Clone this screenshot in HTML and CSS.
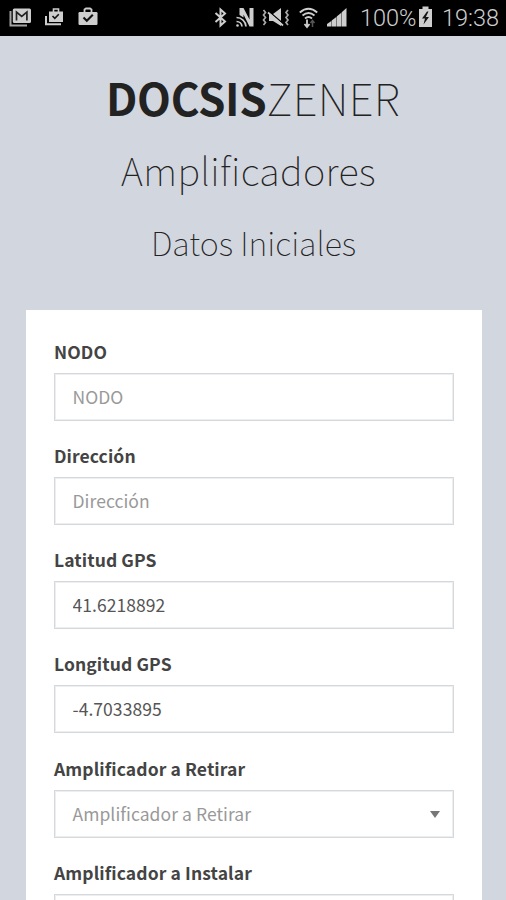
FILE: index.html
```html
<!DOCTYPE html>
<html lang="es">
<head>
<meta charset="utf-8">
<title>DOCSIS Zener</title>
<link rel="stylesheet" href="styles.css">
</head>
<body>
<div class="statusbar">
  <svg class="status-icons" viewBox="0 0 350 36" width="350" height="36">
    <!-- mail -->
    <path d="M10.500 11v14.500h16.500" fill="none" stroke="#a5a5a5" stroke-width="2"/>
    <rect x="12.800" y="8.500" width="18.200" height="14.500" rx="1.500" fill="#cecece"/>
    <path d="M16.500 20.500v-8.500l5.200 4.500 5.200-4.500v8.500" fill="none" stroke="#222" stroke-width="1.700"/>
    <!-- stacked bag -->
    <path d="M46 16v8.300h15" fill="none" stroke="#cecece" stroke-width="2"/>
    <path d="M49 11.500h14v10.500h-14z" fill="#cecece"/>
    <path d="M53.500 12v-3h5v3" fill="none" stroke="#cecece" stroke-width="1.600"/>
    <path d="M52.500 16l2.300 2.300 4-4" fill="none" stroke="#111" stroke-width="1.600"/>
    <!-- bag -->
    <rect x="78.500" y="12" width="19" height="13" rx="1.200" fill="#cecece"/>
    <path d="M84.500 12.500v-3l1.500-1h4l1.500 1v3" fill="none" stroke="#cecece" stroke-width="1.800"/>
    <path d="M83.500 17.500l3.300 3.200 6-6" fill="none" stroke="#111" stroke-width="2.100"/>
    <!-- bluetooth -->
    <path d="M215.500 13l9.500 8.500-4.500 4v-16l4.500 4-9.500 8.500" fill="none" stroke="#cecece" stroke-width="2"/>
    <!-- nfc -->
    <path d="M239.500 15v-7h4l6 11.500v-11.500h4v18.500h-4l-6-12v3z" fill="#cecece"/>
    <path d="M236.500 17.500a9.500 9.500 0 0 1 9.500 9M236.500 21.500a5.500 5.500 0 0 1 5.500 5" fill="none" stroke="#cecece" stroke-width="1.700"/>
    <circle cx="237.500" cy="25.500" r="1.300" fill="#cecece"/>
    <!-- vibrate and mute -->
    <path d="M263.500 10l2 2.500-2 2.500 2 2.500-2 2.500 2 2.500-2 2.500M288 10l-2 2.500 2 2.500-2 2.500 2 2.500-2 2.500 2 2.500" fill="none" stroke="#aaa" stroke-width="1.700"/>
    <path d="M269 14h4l8-6v18l-8-5h-4z" fill="#cecece"/>
    <path d="M269 11.500l14 12" stroke="#000" stroke-width="1.500"/>
    <path d="M268 12.500l15 13" stroke="#cecece" stroke-width="1.700"/>
    <!-- wifi -->
    <path d="M299.800 12.500q8.700-7.500 17.400 0M302.500 15.500q6-5 12 0M305 18.500q3.500-2.800 7 0" fill="none" stroke="#cecece" stroke-width="1.900"/>
    <path d="M307 19.500v7M304.500 24l2.500 3 2.500-3" fill="none" stroke="#cecece" stroke-width="1.800"/>
    <path d="M312.500 27v-6M310.500 23l2-2.500 2 2.500" fill="none" stroke="#555" stroke-width="1.500"/>
    <!-- signal -->
    <path d="M327 26.500v-2.500l4-2.800v5.300zM332 26.500v-6.200l4-3v9.200zM337 26.500v-10.200l4-3.300v13.500zM342 26.500v-14.500l4.500-4v18.500z" fill="#cecece"/>
    <path d="M331 21.200v5.300h1v-6.200zM336 17.300v9.200h1v-10.200zM341 13v13.500h1v-14.500z" fill="#777"/>
  </svg>
  <span class="battery-text">100%</span>
  <svg class="battery" viewBox="0 0 15 21" width="15" height="21">
    <path d="M1 3h3.500v-2.500h6v2.500h3.500v18h-13z" fill="#cecece"/>
    <path d="M9 5.500l-5 7h3l-1.500 6 5.500-7.500h-3.200l2.700-5.500z" fill="#111"/>
  </svg>
  <span class="clock">19:38</span>
</div>
<header class="heading">
  <h1 class="brand"><b>DOCSIS</b><span>ZENER</span></h1>
  <h2 class="section">Amplificadores</h2>
  <h3 class="step">Datos Iniciales</h3>
</header>
<form class="card">
  <div class="field"><label for="nodo">NODO</label><input id="nodo" placeholder="NODO"></div>
  <div class="field"><label for="dir">Dirección</label><input id="dir" placeholder="Dirección"></div>
  <div class="field"><label for="lat">Latitud GPS</label><input id="lat" value="41.6218892"></div>
  <div class="field field-last-input"><label for="lon">Longitud GPS</label><input id="lon" value="-4.7033895"></div>
  <div class="field"><label>Amplificador a Retirar</label><div class="select"><span>Amplificador a Retirar</span><i class="caret"></i></div></div>
  <div class="field"><label>Amplificador a Instalar</label><div class="select"></div></div>
</form>
</body>
</html>
```
FILE: styles.css
```css
* { box-sizing: border-box; }
html, body { height: 100%; }
body {
  display: flex;
  flex-direction: column;
  margin: 0;
  overflow: hidden;
  background: #d2d6de;
  color: #444;
  font-family: "Noto Sans CJK SC", "Noto Sans", sans-serif;
}
.statusbar {
  display: flex;
  flex: none;
  height: 36px;
  background: #000;
  color: #cecece;
  font: 300 23.500px/36px Roboto, sans-serif;
}
.status-icons { flex: none; }
.battery-text { flex: none; width: 68px; padding-left: 10px; white-space: nowrap; }
.battery { flex: none; margin-top: 6px; }
.clock { margin-left: 9px; }
.heading {
  flex: none;
  height: 274px;
  text-align: center;
  color: #222;
}
.heading h1, .heading h2, .heading h3 { margin: 0; font-weight: 100; white-space: nowrap; }
.heading .brand { padding-top: 31px; font-size: 44px; line-height: 60px; }
.brand b { font-weight: 700; letter-spacing: -0.300px; }
.brand span { letter-spacing: 0.300px; }
.heading .section {
  padding: 15px 9px 0 0;
  font-size: 38px;
  line-height: 56px;
  letter-spacing: 0.350px;
}
.heading .step { padding: 19px 0 0 1px; font-size: 32.400px; line-height: 50px; }
.card {
  flex: 1;
  min-height: 0;
  overflow: hidden;
  width: 455.500px;
  margin-left: 26px;
  padding: 29px 27.500px 0;
  background: #fff;
}
.field { height: 104.100px; }
.field-last-input { height: 104.800px; }
.field label {
  display: block;
  height: 34px;
  padding-left: 0.500px;
  font-size: 17.500px;
  line-height: 26px;
  font-weight: 700;
  letter-spacing: 0.100px;
}
.field input, .select {
  display: flex;
  align-items: center;
  width: 400px;
  height: 48px;
  padding: 0 13px 2px 18px;
  border: 1px solid #d5d8dc;
  border-radius: 0;
  box-shadow: inset 0 0 0 1px #eceef0;
  background: #fff;
  color: #555;
  font: 17.500px/26px "Noto Sans CJK SC", "Noto Sans", sans-serif;
  letter-spacing: 0.060px;
  outline: 0;
}
.field input::placeholder, .select { color: #999; opacity: 1; }
.select { justify-content: space-between; padding-bottom: 0; }
.caret {
  border: 5.500px solid transparent;
  border-top: 7px solid #777;
  border-bottom: 0;
}
```
